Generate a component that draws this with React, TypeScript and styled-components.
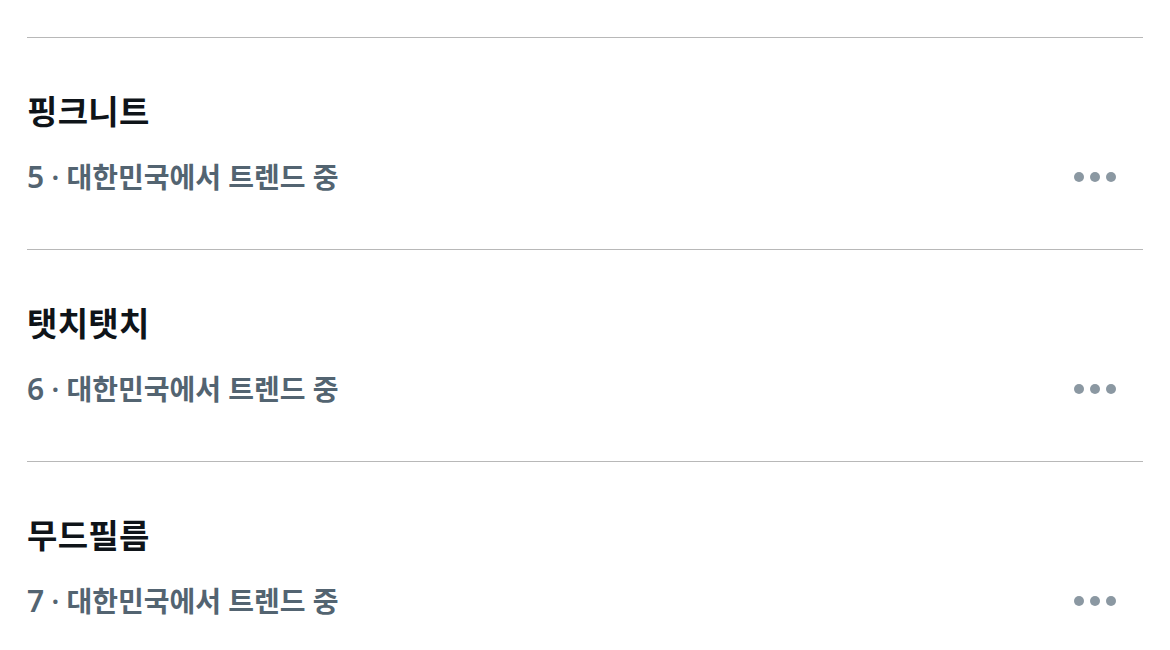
import React from "react";
import styled, { createGlobalStyle } from "styled-components";

const Global = createGlobalStyle`
  html, body { margin: 0; padding: 0; background: #ffffff; }
  body { font-family: "Noto Sans", "Noto Sans CJK KR", sans-serif; }
`;

const Page = styled.div`
  width: 1170px;
  height: 650px;
  overflow: hidden;
  box-sizing: border-box;
  padding: 37px 27px 0;
`;

const Item = styled.div`
  border-top: 1px solid #b8b8b8;
  height: 212px;
  display: flex;
  flex-direction: column;
  justify-content: center;
  box-sizing: border-box;
`;

const Title = styled.div`
  font-size: 33px;
  font-weight: 700;
  color: #0f1419;
  line-height: 40px;
  letter-spacing: 0.3px;
`;

const MetaRow = styled.div`
  display: flex;
  align-items: center;
  justify-content: space-between;
  margin-top: 27px;
`;

const Meta = styled.div`
  font-size: 28px;
  font-weight: 600;
  color: #536471;
  line-height: 36px;
`;

const Rank = styled.span`
  font-size: 30px;
`;

const More = styled.div`
  display: flex;
  gap: 6px;
  margin-right: 27px;
`;

const Dot = styled.span`
  width: 10px;
  height: 10px;
  border-radius: 50%;
  background: #8b98a2;
`;

const trends = [
  { rank: 5, name: "핑크니트" },
  { rank: 6, name: "탯치탯치" },
  { rank: 7, name: "무드필름" },
];

export default function App() {
  return (
    <>
      <Global />
      <Page>
        {trends.map((t) => (
          <Item key={t.rank}>
            <Title>{t.name}</Title>
            <MetaRow>
              <Meta>
                <Rank>{t.rank}</Rank> · 대한민국에서 트렌드 중
              </Meta>
              <More>
                <Dot />
                <Dot />
                <Dot />
              </More>
            </MetaRow>
          </Item>
        ))}
      </Page>
    </>
  );
}
